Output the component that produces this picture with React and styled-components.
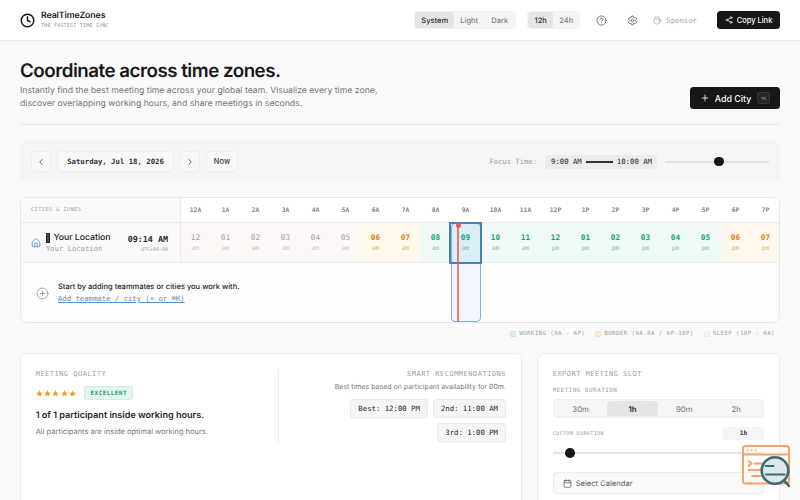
import React from 'react';
import styled, { createGlobalStyle } from 'styled-components';
import {
  Clock,
  CircleHelp,
  Settings,
  Coffee,
  Share2,
  Plus,
  ChevronLeft,
  ChevronRight,
  ChevronDown,
  House,
  CirclePlus,
  Calendar,
} from 'lucide-react';

const sans = '"Inter", "Liberation Sans", sans-serif';
const mono = '"DejaVu Sans Mono", "Liberation Mono", monospace';

const GlobalStyle = createGlobalStyle`
  * {
    box-sizing: border-box;
  }
  body {
    margin: 0;
    background: #fafafa;
    color: #18181b;
    font-family: ${sans};
    text-rendering: geometricPrecision;
    overflow: hidden;
  }
  svg {
    display: block;
    flex: none;
  }
`;

const Page = styled.div`
  width: 800px;
  height: 500px;
  overflow: hidden;
`;

const Mono = styled.span`
  font-family: ${mono};
  font-size: ${({ $size }) => $size}px;
  font-weight: ${({ $bold }) => ($bold ? 700 : 400)};
  letter-spacing: ${({ $track }) => $track || 0}px;
  line-height: ${({ $line }) => ($line ? `${$line}px` : 'normal')};
  color: ${({ $color }) => $color || '#a0a0a0'};
  white-space: pre;
`;

/* Header */

const Header = styled.header`
  display: flex;
  align-items: center;
  justify-content: space-between;
  height: 41px;
  padding: 0 20px;
  background: #fff;
  border-bottom: 1px solid #ececec;
`;

const Brand = styled.div`
  display: flex;
  align-items: center;
  gap: 6px;
`;

const BrandText = styled.div`
  display: flex;
  flex-direction: column;
`;

const BrandName = styled.span`
  font-size: 8.75px;
  font-weight: 600;
  line-height: 12px;
  letter-spacing: -0.1px;
`;

const Nav = styled.nav`
  display: flex;
  align-items: center;
  color: #6f6f73;
`;

const Segment = styled.div`
  display: flex;
  width: ${({ $width }) => $width}px;
  height: 18px;
  padding: 1px;
  margin-right: ${({ $after }) => $after}px;
  background: #f4f4f4;
  border-radius: 4px;
`;

const SegmentItem = styled.span`
  display: flex;
  align-items: center;
  justify-content: center;
  width: ${({ $width }) => $width}px;
  font-size: 7.5px;
  font-weight: 500;
  color: ${({ $active }) => ($active ? '#27272a' : '#7c7c80')};
  background: ${({ $active }) => ($active ? '#e5e5e5' : 'transparent')};
  border-radius: 3.5px;
`;

const NavIcon = styled.span`
  display: flex;
  margin-right: ${({ $after }) => $after}px;
`;

const Sponsor = styled.span`
  display: flex;
  align-items: center;
  gap: 4px;
  margin-right: 20px;
  color: #a1a1a5;
`;

const DarkButton = styled.button`
  display: flex;
  align-items: center;
  justify-content: center;
  gap: ${({ $gap }) => $gap}px;
  width: ${({ $width }) => $width}px;
  height: ${({ $height }) => $height}px;
  padding: 0;
  border: 0;
  border-radius: 3.5px;
  background: #171717;
  color: #fafafa;
  font: 500 ${({ $size }) => $size}px ${sans};
  white-space: nowrap;
`;

const Kbd = styled.span`
  display: flex;
  align-items: center;
  justify-content: center;
  width: 13px;
  height: 12px;
  margin-left: 1px;
  border: 1px solid #3a3a3e;
  border-radius: 2.5px;
  background: #27272a;
`;

/* Hero */

const Main = styled.main`
  padding: 0 20px;
`;

const Hero = styled.section`
  display: flex;
  align-items: flex-end;
  justify-content: space-between;
  height: 84px;
  padding-bottom: 15px;
  border-bottom: 1px solid #e9e9e9;
`;

const Title = styled.h1`
  margin: 0 0 2px;
  font-size: 18.75px;
  font-weight: 600;
  line-height: 24px;
  letter-spacing: -0.5px;
`;

const Lead = styled.p`
  margin: 0 0 -2px;
  font-size: 8.7px;
  line-height: 12.8px;
  color: #757578;
`;

/* Date toolbar */

const Toolbar = styled.section`
  display: flex;
  align-items: center;
  justify-content: space-between;
  height: 43px;
  margin: 15px 0 14px;
  padding: 0 11px;
  background: #f5f5f5;
  border-radius: 7px;
`;

const Group = styled.div`
  display: flex;
  align-items: center;
  gap: ${({ $gap }) => $gap}px;
`;

const LightButton = styled.button`
  display: flex;
  align-items: center;
  justify-content: center;
  width: ${({ $width }) => $width}px;
  height: 21px;
  padding: 0;
  border: 1px solid #ededed;
  border-radius: 4px;
  background: #f8f8f8;
  color: #3f3f46;
  font: 500 7.5px ${sans};
`;

const FocusRange = styled.div`
  display: flex;
  align-items: center;
  justify-content: space-between;
  width: 112px;
  height: 14px;
  padding: 0 5px 0 6px;
  background: #ececec;
  border-radius: 3px;
`;

const RangeDash = styled.span`
  width: 27px;
  height: 2px;
  background: #333;
`;

const Slider = styled.div`
  display: flex;
  align-items: center;
  width: ${({ $width }) => $width};
  height: 10px;
  background: linear-gradient(#e3e3e3, #e3e3e3) center / 100% 2px no-repeat;
`;

const Thumb = styled.span`
  width: 9.5px;
  height: 9.5px;
  margin-left: ${({ $offset }) => $offset}px;
  border-radius: 50%;
  background: #171717;
`;

/* Time grid */

const Grid = styled.section`
  position: relative;
  height: 126px;
  border: 1px solid #e8e8e8;
  border-radius: 7px;
  background: #fdfdfd;
  overflow: hidden;
`;

const GridRow = styled.div`
  display: grid;
  grid-template-columns: 160px repeat(20, 30px);
  height: ${({ $height }) => $height}px;
  border-bottom: 1px solid #ebebeb;
  background: ${({ $header }) => ($header ? '#fff' : '#fafafa')};
`;

const RowHead = styled.div`
  display: flex;
  align-items: center;
  padding: 0 12px 0 10px;
  background: #fafafa;
  border-right: 1px solid #ebebeb;
`;

const HourHead = styled.div`
  display: flex;
  align-items: center;
  justify-content: center;
  padding-top: 1px;
  margin-left: -1px;
`;

const hourTones = {
  sleep: { bg: '#fcf8f8', text: '#a19d9d', sub: '#c8c2c2' },
  border: { bg: '#fff9ed', text: '#df7d20', sub: '#dcb481' },
  working: { bg: '#effaf6', text: '#23a073', sub: '#8bc0ac' },
};

const HourCell = styled.div`
  display: flex;
  flex-direction: column;
  align-items: center;
  padding: 8px 1px 0 0;
  background: ${({ $tone }) => hourTones[$tone].bg};
`;

const Place = styled.div`
  display: flex;
  flex-direction: column;
  margin-left: 5px;
  flex: 1;
`;

const PlaceName = styled.span`
  display: flex;
  align-items: center;
  gap: 4px;
  font-size: 8.75px;
  font-weight: 500;
  line-height: 12px;
  letter-spacing: -0.05px;
  white-space: nowrap;
`;

const FlagBlock = styled.span`
  width: 3.5px;
  height: 10px;
  background: #4a4a4a;
  border: 1px solid #222;
`;

const PlaceTime = styled.div`
  display: flex;
  flex-direction: column;
  align-items: flex-end;
  padding-top: 2px;
`;

const EmptyRow = styled.div`
  display: flex;
  align-items: center;
  gap: 9px;
  height: 60px;
  padding-left: 15px;
  color: #a0a0a0;
`;

const EmptyText = styled.div`
  display: flex;
  flex-direction: column;
  gap: 1px;
  padding-bottom: 2px;
  font-size: 7.5px;
  font-weight: 500;
  line-height: 12px;
  color: #222;
`;

const AddLink = styled(Mono)`
  text-decoration: underline;
`;

const SelectedColumn = styled.div`
  position: absolute;
  left: 430px;
  top: 25px;
  width: 30px;
  height: 99px;
  border: 1px solid #82b3df;
  border-radius: 4px;
  background: rgba(59, 140, 246, 0.06);
`;

const SelectedCell = styled.div`
  position: absolute;
  left: 428px;
  top: 24px;
  width: 33px;
  height: 42px;
  border: 2px solid #427fc4;
  background: rgba(56, 170, 248, 0.05);
`;

const NowLine = styled.div`
  position: absolute;
  left: 436px;
  top: 26px;
  width: 2px;
  height: 99px;
  background: rgba(230, 80, 92, 0.75);

  &::before {
    content: '';
    position: absolute;
    left: -1.5px;
    top: -1px;
    width: 5px;
    height: 5px;
    border-radius: 50%;
    background: #ea5561;
  }
`;

const Legend = styled.div`
  display: flex;
  align-items: center;
  justify-content: flex-end;
  gap: 10px;
  height: 21px;
  margin-bottom: 9px;
  padding-right: 5px;
`;

const LegendItem = styled.span`
  display: flex;
  align-items: center;
  gap: 3px;
`;

const Swatch = styled.span`
  width: 6px;
  height: 6px;
  border: 1px solid ${({ $edge }) => $edge};
  border-radius: 1.5px;
  background: ${({ $fill }) => $fill};
`;

/* Cards */

const Cards = styled.section`
  display: grid;
  grid-template-columns: 502px 243px;
  gap: 15px;
  height: 180px;
`;

const Card = styled.div`
  display: flex;
  padding: 15px 15px 15px 14.7px;
  border: 1px solid #ececec;
  border-radius: 7px;
  background: #fff;
`;

const Quality = styled.div`
  display: flex;
  flex-direction: column;
  width: 243px;
  height: 75px;
  border-right: 1px solid #ededed;
`;

const Rating = styled.div`
  display: flex;
  align-items: center;
  gap: 8px;
  height: 14px;
  margin-top: 7px;
`;

const Stars = styled.div`
  display: flex;
  gap: 1.4px;
  padding-top: 1px;
`;

const Badge = styled.span`
  display: flex;
  align-items: center;
  justify-content: center;
  width: 49px;
  height: 14px;
  border: 1px solid #c9eedf;
  border-radius: 2.5px;
  background: #e3f7ef;
`;

const QualityTitle = styled.span`
  margin-top: 9px;
  font-size: 9.1px;
  font-weight: 600;
  line-height: 14px;
  color: #27272a;
`;

const Note = styled.span`
  margin-top: ${({ $top }) => $top}px;
  font-size: ${({ $size }) => $size}px;
  line-height: 12px;
  color: #77777b;
`;

const Recommendations = styled.div`
  display: flex;
  flex: 1;
  flex-direction: column;
  align-items: flex-end;
`;

const Slots = styled.div`
  display: flex;
  flex-wrap: wrap;
  justify-content: flex-end;
  gap: 5px;
  margin-top: 6px;
`;

const Slot = styled.span`
  display: flex;
  align-items: center;
  height: 19px;
  padding: 0 7px;
  border: 1px solid #eaeaea;
  border-radius: 3px;
  background: #f5f5f5;
`;

const Export = styled.div`
  display: flex;
  flex: 1;
  flex-direction: column;
`;

const Durations = styled.div`
  display: grid;
  grid-template-columns: repeat(4, 1fr);
  height: 19px;
  margin-top: 3px;
  padding: 1px;
  border: 1px solid #efefef;
  border-radius: 4px;
  background: #f5f5f5;
`;

const Duration = styled.span`
  display: flex;
  align-items: center;
  justify-content: center;
  font-size: 7.8px;
  font-weight: ${({ $active }) => ($active ? 600 : 400)};
  color: ${({ $active }) => ($active ? '#27272a' : '#707074')};
  background: ${({ $active }) => ($active ? '#e5e5e5' : 'transparent')};
  border-radius: 3px;
`;

const CustomRow = styled.div`
  display: flex;
  align-items: center;
  justify-content: space-between;
  height: 13px;
  margin: 9px 0 8px;
`;

const CustomValue = styled.span`
  display: flex;
  align-items: center;
  justify-content: center;
  width: 41px;
  height: 13px;
  border-radius: 2.5px;
  background: #f5f5f5;
`;

const DurationLabel = styled(Mono)`
  margin-top: 8px;
`;

const Select = styled.div`
  display: flex;
  align-items: center;
  gap: 4px;
  height: 22px;
  margin-top: 14px;
  padding: 0 9px;
  border: 1px solid #ececec;
  border-radius: 4px;
  background: #fafafa;
  color: #5a5a5e;
  font-size: 7.6px;

  svg:last-child {
    margin-left: auto;
  }
`;

const CornerBadge = styled.div`
  position: fixed;
  right: 9px;
  bottom: 10px;
`;

const hours = Array.from({ length: 20 }, (_, h) => {
  const hour = h % 12 || 12;
  let tone = 'sleep';
  if (h >= 8 && h < 18) tone = 'working';
  else if (h >= 6) tone = 'border';
  return {
    head: `${hour}${h < 12 ? 'A' : 'P'}`,
    label: String(hour).padStart(2, '0'),
    period: h < 12 ? 'am' : 'pm',
    tone,
  };
});

const legend = [
  { label: 'WORKING (8A - 6P)', fill: '#daf3e9', edge: '#bce7d6' },
  { label: 'BORDER (6A-8A / 6P-10P)', fill: '#f9efc9', edge: '#f0e2b0' },
  { label: 'SLEEP (10P - 6A)', fill: '#f7f1f2', edge: '#eee7e8' },
];

const Star = () => (
  <svg width="7" height="7" viewBox="0 0 24 24" fill="#f39b1d">
    <path d="M12 1l3.2 7.4 8 .7-6.1 5.3 1.9 7.8L12 18l-7 4.200 1.900-7.800L.8 9.100l8-.7z" />
  </svg>
);

const InspectIcon = () => (
  <svg width="50" height="46" viewBox="0 0 50 46" fill="none">
    <g stroke="#f0a66a" strokeWidth="2">
      <rect x="2" y="2" width="46" height="37.500" rx="2.500" fill="#fff3e9" fillOpacity="0.350" />
      <path d="M2 10.500h46" />
      <path d="M5.500 6.200h2M9.500 6.200h2M13.500 6.200h2" strokeWidth="1.300" />
      <path d="M7 16.500l3.500 3-3.500 3" />
      <path d="M13 19.500h10M7 26h13M10.500 32h10" />
    </g>
    <g stroke="#3c6b70" strokeLinecap="round">
      <circle cx="34" cy="26.500" r="13.300" fill="#dce8eb" strokeWidth="2.600" />
      <path d="M24.500 22h8M25 30.500h18.500" strokeWidth="2" />
      <path d="M43.500 37l4.500 4.800" strokeWidth="2.600" />
    </g>
  </svg>
);

const TopBar = () => (
  <Header>
    <Brand>
      <Clock size={15} strokeWidth={2.4} />
      <BrandText>
        <BrandName>RealTimeZones</BrandName>
        <Mono $size={5} $track={0.22} $line={9} $color="#8f8f8f">THE FASTEST TIME SYNC</Mono>
      </BrandText>
    </Brand>
    <Nav>
      <Segment $width={102} $after={11}>
        <SegmentItem $width={39} $active>System</SegmentItem>
        <SegmentItem $width={30}>Light</SegmentItem>
        <SegmentItem $width={31}>Dark</SegmentItem>
      </Segment>
      <Segment $width={53} $after={16}>
        <SegmentItem $width={25} $active>12h</SegmentItem>
        <SegmentItem $width={26}>24h</SegmentItem>
      </Segment>
      <NavIcon $after={20}>
        <CircleHelp size={11} strokeWidth={2} />
      </NavIcon>
      <NavIcon $after={15}>
        <Settings size={11} strokeWidth={2} />
      </NavIcon>
      <Sponsor>
        <Coffee size={9} strokeWidth={2} />
        <Mono $size={7.3} $color="#a1a1a5">Sponsor</Mono>
      </Sponsor>
      <DarkButton $width={63} $height={18} $gap={4} $size={7.5}>
        <Share2 size={8} />
        Copy Link
      </DarkButton>
    </Nav>
  </Header>
);

const DateToolbar = () => (
  <Toolbar>
    <Group $gap={6}>
      <LightButton $width={20}>
        <ChevronLeft size={10} />
      </LightButton>
      <LightButton $width={117}>
        <Mono $size={7.3} $bold $color="#333">Saturday, Jul 18, 2026</Mono>
      </LightButton>
      <LightButton $width={20}>
        <ChevronRight size={10} />
      </LightButton>
      <LightButton $width={32}>Now</LightButton>
    </Group>
    <Group $gap={8}>
      <Mono $size={7.2}>Focus Time:</Mono>
      <FocusRange>
        <Mono $size={7.3} $color="#222">9:00 AM</Mono>
        <RangeDash />
        <Mono $size={7.3} $color="#222">10:00 AM</Mono>
      </FocusRange>
      <Slider $width="104px">
        <Thumb $offset={49} />
      </Slider>
    </Group>
  </Toolbar>
);

const TimeGrid = () => (
  <Grid>
    <GridRow $height={25} $header>
      <RowHead>
        <Mono $size={5.2} $track={0.48}>CITIES &amp; ZONES</Mono>
      </RowHead>
      {hours.map(({ head }) => (
        <HourHead key={head}>
          <Mono $size={6.3} $bold $color="#858585">{head}</Mono>
        </HourHead>
      ))}
    </GridRow>
    <GridRow $height={40}>
      <RowHead>
        <House size={10} color="#4b8fe8" />
        <Place>
          <PlaceName>
            <FlagBlock />
            Your Location
          </PlaceName>
          <Mono $size={7.2} $line={10}>Your Location</Mono>
        </Place>
        <PlaceTime>
          <Mono $size={8.4} $bold $line={12} $color="#27272a">09:14 AM</Mono>
          <Mono $size={5} $line={10}>UTC+00:00</Mono>
        </PlaceTime>
      </RowHead>
      {hours.map(({ head, label, period, tone }) => (
        <HourCell key={head} $tone={tone}>
          <Mono $size={7.7} $line={13} $bold={tone !== 'sleep'} $color={hourTones[tone].text}>
            {label}
          </Mono>
          <Mono $size={6.2} $line={9} $color={hourTones[tone].sub}>{period}</Mono>
        </HourCell>
      ))}
    </GridRow>
    <EmptyRow>
      <CirclePlus size={13} strokeWidth={1.8} />
      <EmptyText>
        Start by adding teammates or cities you work with.
        <AddLink $size={7.25} $color="#4f93d2">Add teammate / city (+ or ⌘K)</AddLink>
      </EmptyText>
    </EmptyRow>
    <SelectedColumn />
    <SelectedCell />
    <NowLine />
  </Grid>
);

const QualityCard = () => (
  <Card>
    <Quality>
      <Mono $size={7} $track={0.48} $line={10}>MEETING QUALITY</Mono>
      <Rating>
        <Stars>
          {[1, 2, 3, 4, 5].map((n) => (
            <Star key={n} />
          ))}
        </Stars>
        <Badge>
          <Mono $size={6} $bold $track={0.43} $color="#25976e">EXCELLENT</Mono>
        </Badge>
      </Rating>
      <QualityTitle>1 of 1 participant inside working hours.</QualityTitle>
      <Note $top={3} $size={7.5}>All participants are inside optimal working hours.</Note>
    </Quality>
    <Recommendations>
      <Mono $size={7} $track={0.5} $line={10}>SMART RECOMMENDATIONS</Mono>
      <Note $top={2} $size={7}>Best times based on participant availability for 60m.</Note>
      <Slots>
        {['Best: 12:00 PM', '2nd: 11:00 AM', '3rd: 1:00 PM'].map((slot) => (
          <Slot key={slot}>
            <Mono $size={7.3} $color="#222">{slot}</Mono>
          </Slot>
        ))}
      </Slots>
    </Recommendations>
  </Card>
);

const ExportCard = () => (
  <Card>
    <Export>
      <Mono $size={7} $track={0.48} $line={10}>EXPORT MEETING SLOT</Mono>
      <DurationLabel $size={5.8} $track={0.55} $line={9}>MEETING DURATION</DurationLabel>
      <Durations>
        {['30m', '1h', '90m', '2h'].map((d) => (
          <Duration key={d} $active={d === '1h'}>{d}</Duration>
        ))}
      </Durations>
      <CustomRow>
        <Mono $size={5.1} $track={0.35}>CUSTOM DURATION</Mono>
        <CustomValue>
          <Mono $size={6.2} $bold $color="#333">1h</Mono>
        </CustomValue>
      </CustomRow>
      <Slider $width="100%">
        <Thumb $offset={12.5} />
      </Slider>
      <Select>
        <Calendar size={9} />
        Select Calendar
        <ChevronDown size={9} />
      </Select>
    </Export>
  </Card>
);

const App = () => (
  <Page>
    <GlobalStyle />
    <TopBar />
    <Main>
      <Hero>
        <div>
          <Title>Coordinate across time zones.</Title>
          <Lead>
            Instantly find the best meeting time across your global team. Visualize every time zone,
            <br />
            discover overlapping working hours, and share meetings in seconds.
          </Lead>
        </div>
        <DarkButton $width={90} $height={22} $gap={5} $size={8.9}>
          <Plus size={10} />
          Add City
          <Kbd>
            <Mono $size={4.5} $color="#a1a1aa">⌘K</Mono>
          </Kbd>
        </DarkButton>
      </Hero>
      <DateToolbar />
      <TimeGrid />
      <Legend>
        {legend.map(({ label, fill, edge }) => (
          <LegendItem key={label}>
            <Swatch $fill={fill} $edge={edge} />
            <Mono $size={5.8} $track={0.4}>{label}</Mono>
          </LegendItem>
        ))}
      </Legend>
      <Cards>
        <QualityCard />
        <ExportCard />
      </Cards>
    </Main>
    <CornerBadge>
      <InspectIcon />
    </CornerBadge>
  </Page>
);

export default App;
